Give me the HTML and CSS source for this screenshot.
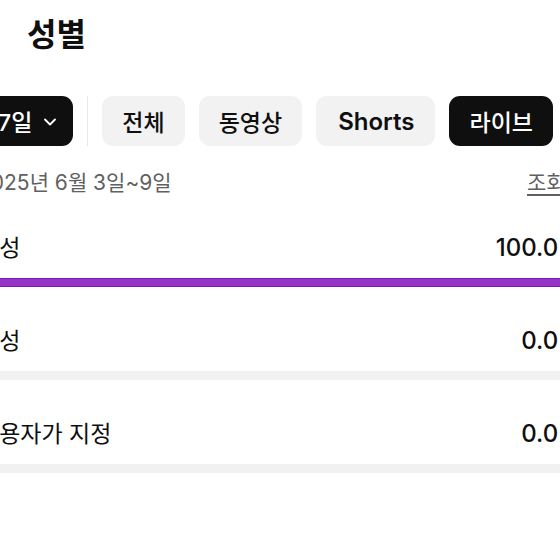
FILE: index.html
```html
<!DOCTYPE html>
<html lang="ko">
    <head>
        <meta charset="UTF-8" />
        <title>성별</title>
        <link rel="stylesheet" href="styles.css">
    </head>
    <body>
        <div class="page">
            <h1 class="title">성별</h1>

            <!-- period + content type filters -->
            <div class="chips">
                <button class="chip dark period">7일
                    <svg class="chevron" width="12" height="8" viewBox="0 0 12 8">
                        <path d="M1 1.5 L6 6.5 L11 1.5" fill="none" stroke="#fff" stroke-width="1.8" stroke-linecap="round" stroke-linejoin="round" />
                    </svg>
                </button>
                <span class="divider"></span>
                <button class="chip">전체</button>
                <button class="chip">동영상</button>
                <button class="chip latin">Shorts</button>
                <button class="chip dark">라이브</button>
            </div>

            <div class="meta">
                <span>2025년 6월 3일~9일</span>
                <span class="metric">조회수</span>
            </div>

            <div class="row">
                <div class="row-head">
                    <span class="label">여성</span>
                    <span class="value">100.0%</span>
                </div>
                <div class="track"><div class="fill" style="width: 100%"></div></div>
            </div>
            <div class="row">
                <div class="row-head">
                    <span class="label">남성</span>
                    <span class="value">0.0%</span>
                </div>
                <div class="track"><div class="fill" style="width: 0%"></div></div>
            </div>
            <div class="row">
                <div class="row-head">
                    <span class="label">사용자가 지정</span>
                    <span class="value">0.0%</span>
                </div>
                <div class="track"><div class="fill" style="width: 0%"></div></div>
            </div>
        </div>
    </body>
</html>
```

FILE: styles.css
```css
html,
body {
    margin: 0;
    background-color: #fff;
    overflow: hidden;
}
body {
    color: #0f0f0f;
    font-family: Inter, 'Noto Sans CJK KR', sans-serif;
}
/* page is wider than the window, cut on both sides */
.page {
    width: 604px;
    margin-left: -22px;
}
.title {
    margin: 15px 0 0 49px;
    font-size: 32px;
    line-height: 40px;
    font-weight: 700;
}
.chips {
    display: flex;
    align-items: center;
    gap: 14px;
    margin-top: 41px;
}
.chip {
    display: flex;
    align-items: center;
    gap: 14px;
    height: 50px;
    padding: 0 20px;
    border: none;
    border-radius: 11px;
    background-color: #f2f2f2;
    color: #0f0f0f;
    font-family: inherit;
    font-size: 23px;
    font-weight: 500;
    white-space: nowrap;
}
.chip.dark {
    background-color: #0f0f0f;
    color: #fff;
}
.chip.period {
    gap: 12px;
    padding-right: 17px;
}
.chip.latin {
    padding: 0 21px 0 22px;
    font-weight: 600;
    font-size: 24px;
}
.chevron {
    margin-top: 2px;
}
.divider {
    width: 1px;
    height: 50px;
    background-color: #e8e8e8;
    flex-shrink: 0;
}
.meta {
    display: flex;
    justify-content: space-between;
    margin-top: 24px;
    margin-right: -3px;
    color: #606060;
    font-size: 21px;
    line-height: 26px;
}
.metric {
    text-decoration: underline;
    text-underline-offset: 4px;
}
.row {
    margin-top: 37px;
}
.row + .row {
    margin-top: 39px;
}
.row-head {
    display: flex;
    justify-content: space-between;
    font-size: 23px;
    line-height: 30px;
}
.value {
    font-size: 24px;
    font-weight: 500;
}
.track {
    margin-top: 15px;
    height: 9px;
    background-color: #f1f1f1;
}
.fill {
    height: 100%;
    box-sizing: border-box;
    background-color: #9534c8;
    border-top: 1px solid #7b1fa8;
    border-bottom: 1px solid #7b1fa8;
}
```
